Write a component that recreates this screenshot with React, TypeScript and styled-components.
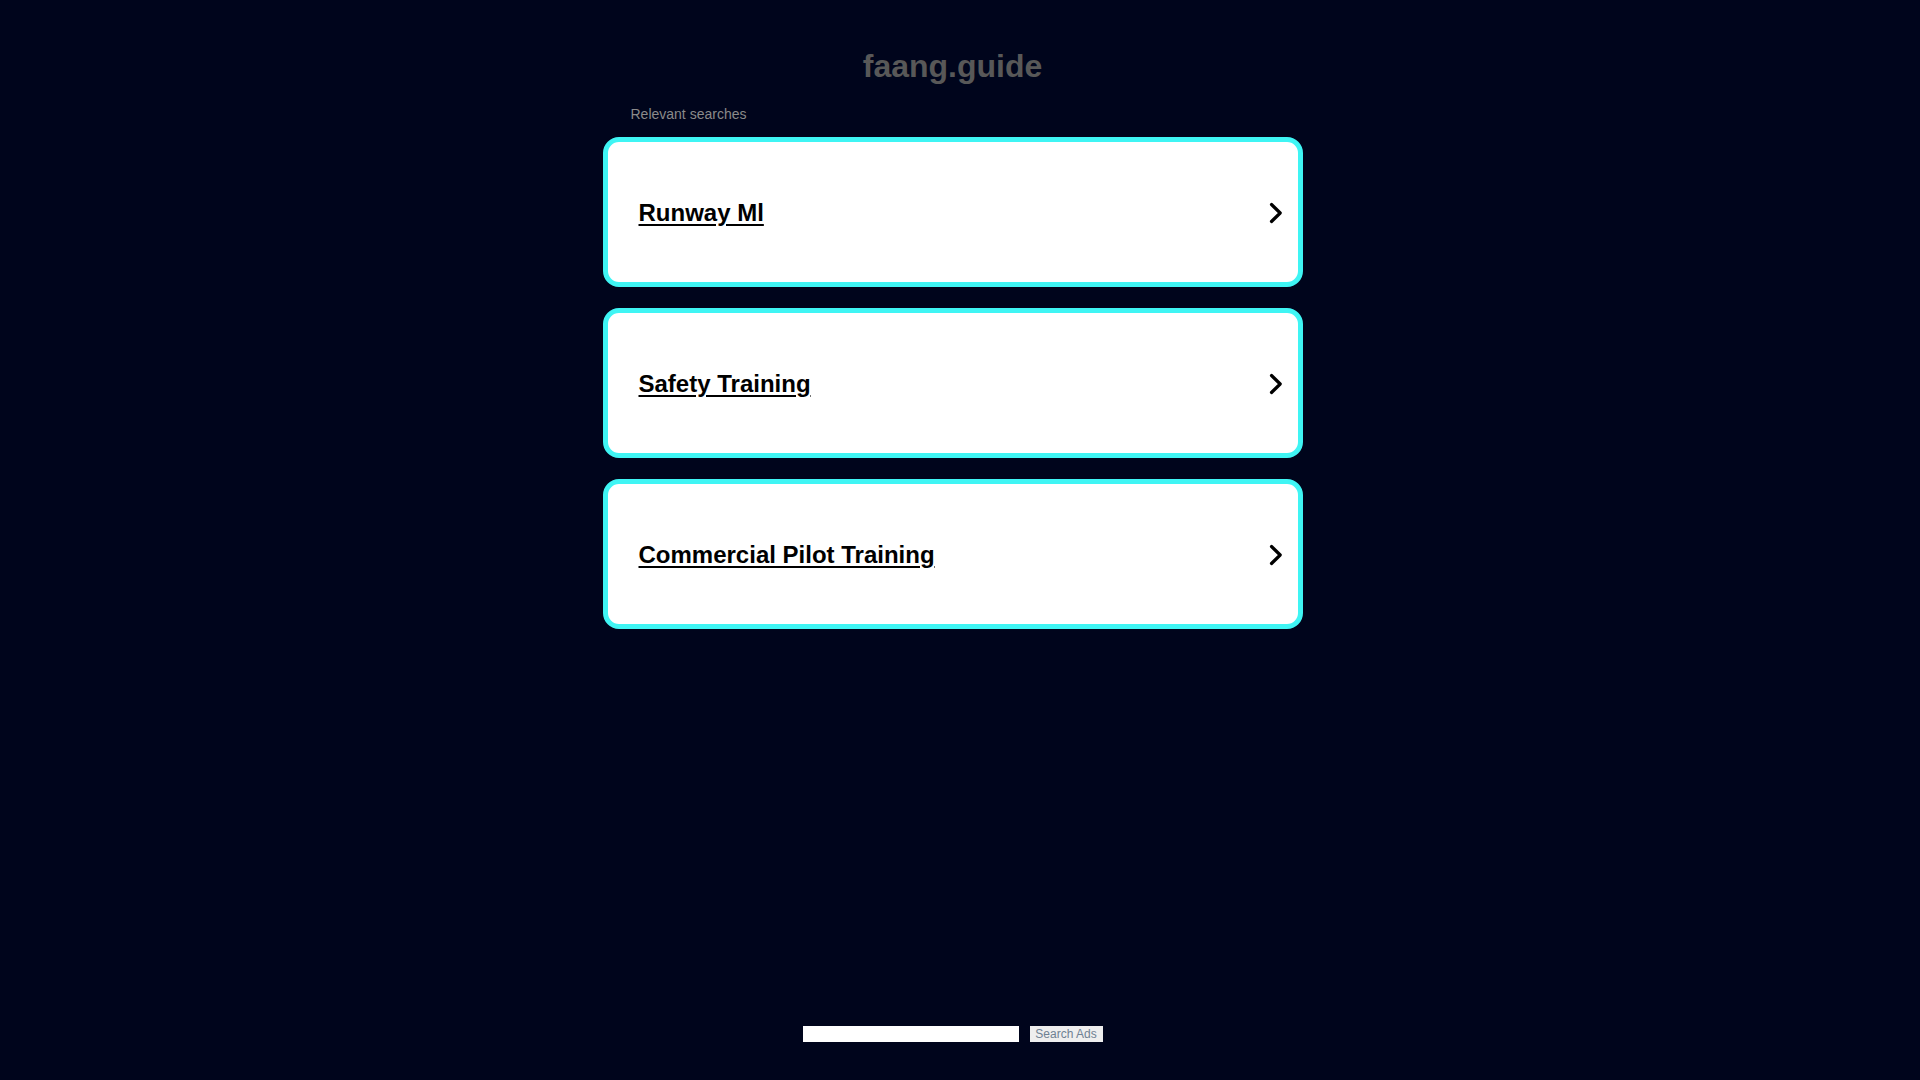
import React from "react";
import styled, { createGlobalStyle } from "styled-components";

const GlobalStyle = createGlobalStyle`
  html { overflow-y: scroll; }
  body {
    margin: 0;
    background: #00051c;
    font-family: "Liberation Sans", Arial, sans-serif;
  }
`;

const Page = styled.div`
  display: flex;
  flex-direction: column;
  align-items: center;
  padding: 48px 15px 60px 0;
`;

const Title = styled.h1`
  margin: 0;
  font-size: 32px;
  line-height: 36px;
  font-weight: bold;
  color: #585858;
  text-align: center;
`;

const Column = styled.div`
  width: 700px;
  display: flex;
  flex-direction: column;
`;

const Label = styled.div`
  margin: 22px 0 15px 28px;
  font-size: 14px;
  line-height: 16px;
  color: #8a8a8a;
`;

const List = styled.div`
  display: flex;
  flex-direction: column;
  gap: 21px;
`;

const Card = styled.a`
  box-sizing: border-box;
  height: 150px;
  display: flex;
  align-items: center;
  justify-content: space-between;
  padding: 2px 15px 0 31px;
  background: #ffffff;
  border: 5px solid #3ff5f4;
  border-radius: 16px;
  text-decoration: none;
  cursor: pointer;
`;

const CardText = styled.span`
  font-size: 24px;
  font-weight: bold;
  color: #000000;
  text-decoration: underline;
  text-decoration-thickness: 2px;
  text-underline-offset: 3px;
`;

const Chevron = () => (
  <svg width="14" height="22" viewBox="0 0 14 22" fill="none">
    <polyline
      points="2.5,2.5 11.2,11 2.5,19.5"
      stroke="#000"
      strokeWidth="3.2"
      strokeLinecap="round"
      strokeLinejoin="round"
    />
  </svg>
);

const SearchForm = styled.form`
  margin-top: 397px;
  display: flex;
  align-items: center;
  gap: 11px;
`;

const SearchInput = styled.input`
  box-sizing: border-box;
  width: 216px;
  height: 16px;
  border: none;
  padding: 0 2px;
  background: #ffffff;
  outline: none;
`;

const SearchButton = styled.button`
  box-sizing: border-box;
  width: 73px;
  height: 16px;
  border: none;
  padding: 0;
  background: #eeeeee;
  color: #6f8193;
  font-family: "Liberation Sans", Arial, sans-serif;
  font-size: 12px;
  line-height: 16px;
`;

const items = ["Runway Ml", "Safety Training", "Commercial Pilot Training"];

export default function App() {
  return (
    <>
      <GlobalStyle />
      <Page>
        <Title>faang.guide</Title>
        <Column>
          <Label>Relevant searches</Label>
          <List>
            {items.map((t) => (
              <Card key={t}>
                <CardText>{t}</CardText>
                <Chevron />
              </Card>
            ))}
          </List>
        </Column>
        <SearchForm onSubmit={(e) => e.preventDefault()}>
          <SearchInput type="text" />
          <SearchButton type="submit">Search Ads</SearchButton>
        </SearchForm>
      </Page>
    </>
  );
}
